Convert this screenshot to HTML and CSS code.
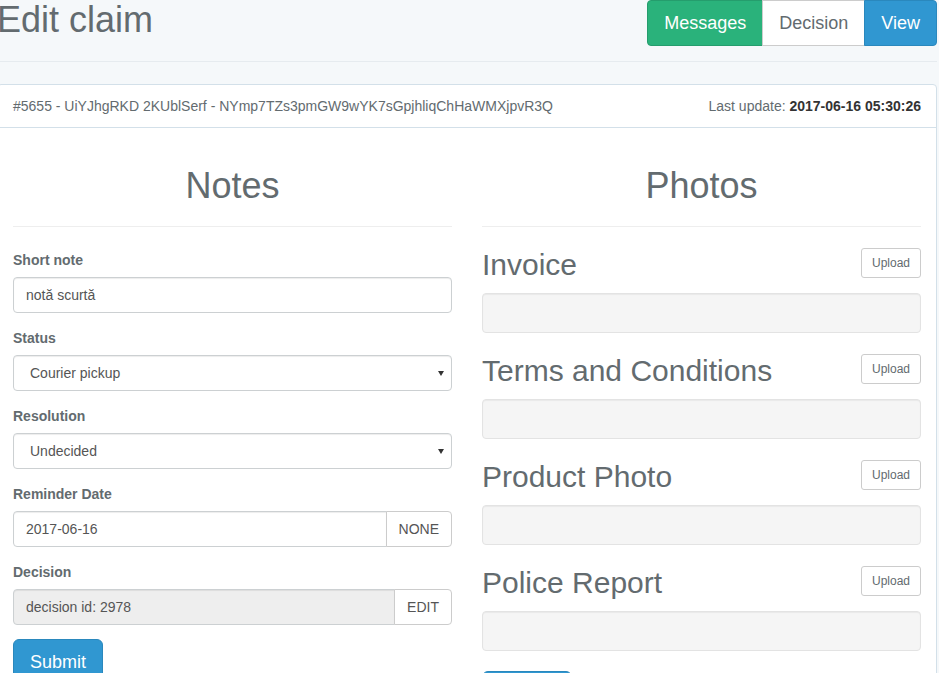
FILE: index.html
```html
<!DOCTYPE html>
<html lang="en">
<head>
<meta charset="utf-8">
<title>Edit claim</title>
<link rel="stylesheet" href="styles.css">
</head>
<body>
<div class="container">
  <div class="page-top">
    <h1 class="title">Edit claim</h1>
    <div class="btn-group">
      <a class="btn btn-lg btn-success">Messages</a>
      <a class="btn btn-lg btn-default">Decision</a>
      <a class="btn btn-lg btn-primary">View</a>
    </div>
  </div>

  <div class="panel">
    <div class="panel-heading">
      <span>#5655 - UiYJhgRKD 2KUblSerf - NYmp7TZs3pmGW9wYK7sGpjhliqChHaWMXjpvR3Q</span>
      <span>Last update: <b>2017-06-16 05:30:26</b></span>
    </div>
    <div class="panel-body">
      <div class="col">
        <h1 class="section-head">Notes</h1>
        <form class="notes-form">
          <div class="form-group">
            <label>Short note</label>
            <input class="form-control" type="text" value="notă scurtă">
          </div>
          <div class="form-group">
            <label>Status</label>
            <div class="select-wrap">
              <select class="form-control"><option>Courier pickup</option></select>
            </div>
          </div>
          <div class="form-group">
            <label>Resolution</label>
            <div class="select-wrap">
              <select class="form-control"><option>Undecided</option></select>
            </div>
          </div>
          <div class="form-group">
            <label>Reminder Date</label>
            <div class="input-group">
              <input class="form-control" type="text" value="2017-06-16">
              <button type="button" class="btn btn-default addon">NONE</button>
            </div>
          </div>
          <div class="form-group">
            <label>Decision</label>
            <div class="input-group">
              <input class="form-control" type="text" value="decision id: 2978" disabled>
              <button type="button" class="btn btn-default addon">EDIT</button>
            </div>
          </div>
          <button type="button" class="btn btn-lg btn-primary">Submit</button>
        </form>
      </div>
      <div class="col">
        <h1 class="section-head">Photos</h1>
        <h3 class="photo-title">Invoice <button type="button" class="btn btn-sm btn-default">Upload</button></h3>
        <div class="well"></div>
        <h3 class="photo-title">Terms and Conditions <button type="button" class="btn btn-sm btn-default">Upload</button></h3>
        <div class="well"></div>
        <h3 class="photo-title">Product Photo <button type="button" class="btn btn-sm btn-default">Upload</button></h3>
        <div class="well"></div>
        <h3 class="photo-title">Police Report <button type="button" class="btn btn-sm btn-default">Upload</button></h3>
        <div class="well"></div>
        <button type="button" class="btn btn-lg btn-primary">Submit</button>
      </div>
    </div>
  </div>
</div>
</body>
</html>
```

FILE: styles.css
```css
* { box-sizing: border-box; }

html, body { height: 100%; }

body {
  margin: 0;
  background: #f5f8fa;
  font-family: "Liberation Sans", Arial, sans-serif;
  font-size: 14px;
  line-height: 1.6;
  color: #636b6f;
  overflow: hidden;
}

.container {
  width: 940px;
  margin-left: -3px;
}

.page-top {
  display: flex;
  justify-content: space-between;
  align-items: flex-start;
  padding-bottom: 15px;
  border-bottom: 1px solid #e6ebef;
  margin-bottom: 22px;
}

.title {
  margin: 0;
  font-size: 36px;
  line-height: 1.1;
  font-weight: 400;
}

.btn-group {
  display: flex;
}

.btn {
  display: inline-block;
  font-family: inherit;
  font-size: 14px;
  line-height: 1.6;
  padding: 6px 12px;
  border: 1px solid transparent;
  border-radius: 4px;
  cursor: pointer;
  text-align: center;
  white-space: nowrap;
}

.btn-lg {
  font-size: 18px;
  line-height: 24px;
  padding: 10px 16px;
  border-radius: 6px;
}

.btn-sm {
  font-size: 12px;
  line-height: 1.5;
  padding: 5px 10px;
  border-radius: 3px;
}

.btn-group .btn { border-radius: 0; }
.btn-group .btn:first-child { border-radius: 4px 0 0 4px; }
.btn-group .btn:last-child { border-radius: 0 4px 4px 0; }
.btn-group .btn + .btn { margin-left: -1px; }

.btn-success { background: #2ab27b; border-color: #259d6d; color: #fff; }
.btn-primary { background: #3097d1; border-color: #2a88bd; color: #fff; }
.btn-default { background: #fff; border-color: #ccc; color: #636b6f; }

.panel {
  background: #fff;
  border: 1px solid #d3e0e9;
  border-radius: 4px;
}

.panel-heading {
  display: flex;
  justify-content: space-between;
  padding: 10px 15px;
  border-bottom: 1px solid #d3e0e9;
  border-radius: 3px 3px 0 0;
}

.panel-heading b { color: #333; }

.panel-body {
  padding: 15px;
  display: grid;
  grid-template-columns: 1fr 1fr;
  column-gap: 30px;
}

.section-head {
  margin: 23px 0 20px;
  padding-bottom: 20px;
  border-bottom: 1px solid #eee;
  font-size: 36px;
  line-height: 1.1;
  font-weight: 400;
  text-align: center;
}

.notes-form { padding-top: 2px; }

.form-group { margin-bottom: 14px; }

label {
  display: block;
  font-weight: 700;
  line-height: 22px;
  margin-bottom: 6px;
}

.form-control {
  display: block;
  width: 100%;
  height: 36px;
  padding: 6px 12px;
  font-family: inherit;
  font-size: 14px;
  line-height: 1.6;
  color: #555;
  background: #fff;
  border: 1px solid #ccd0d2;
  border-radius: 4px;
  box-shadow: inset 0 1px 1px rgba(0, 0, 0, .075);
}

.form-control:disabled {
  background: #eee;
  opacity: 1;
}

.select-wrap { position: relative; }

.select-wrap select {
  appearance: none;
  -webkit-appearance: none;
  padding-left: 16px;
}

.select-wrap::after {
  content: "";
  position: absolute;
  right: 8px;
  top: 16px;
  border-left: 3.5px solid transparent;
  border-right: 3.5px solid transparent;
  border-top: 5px solid #333;
  pointer-events: none;
}

.input-group { display: flex; }

.input-group .form-control {
  flex: 1;
  border-radius: 4px 0 0 4px;
}

.input-group .addon {
  margin-left: -1px;
  border-radius: 0 4px 4px 0;
  color: #555;
  height: 36px;
}

.photo-title {
  display: flex;
  justify-content: space-between;
  align-items: flex-start;
  margin: 20px 0 10px;
  font-size: 30px;
  line-height: 36px;
  font-weight: 400;
}

.photo-title .btn { margin-top: 1px; }

.well {
  min-height: 20px;
  padding: 19px;
  margin-bottom: 20px;
  background: #f5f5f5;
  border: 1px solid #e3e3e3;
  border-radius: 4px;
  box-shadow: inset 0 1px 1px rgba(0, 0, 0, .05);
}
```
